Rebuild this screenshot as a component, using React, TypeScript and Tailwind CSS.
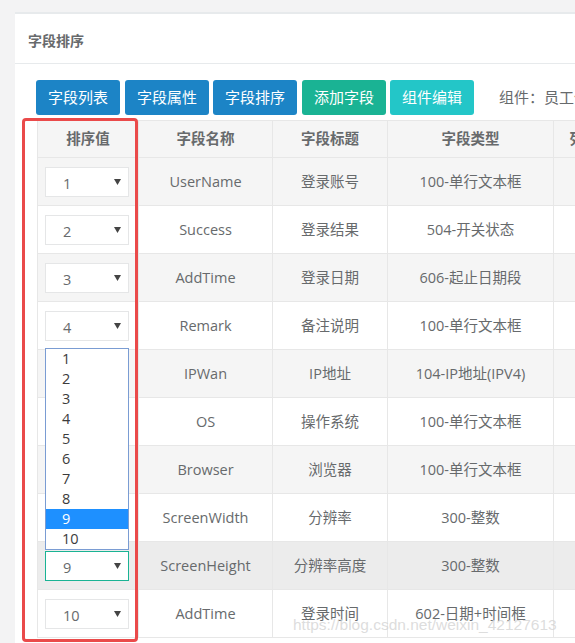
import React from "react";

const rows = [
  { v: "1", name: "UserName", title: "登录账号", type: "100-单行文本框" },
  { v: "2", name: "Success", title: "登录结果", type: "504-开关状态" },
  { v: "3", name: "AddTime", title: "登录日期", type: "606-起止日期段" },
  { v: "4", name: "Remark", title: "备注说明", type: "100-单行文本框" },
  { v: "5", name: "IPWan", title: "IP地址", type: "104-IP地址(IPV4)" },
  { v: "6", name: "OS", title: "操作系统", type: "100-单行文本框" },
  { v: "7", name: "Browser", title: "浏览器", type: "100-单行文本框" },
  { v: "8", name: "ScreenWidth", title: "分辨率", type: "300-整数" },
  { v: "9", name: "ScreenHeight", title: "分辨率高度", type: "300-整数" },
  { v: "10", name: "AddTime", title: "登录时间", type: "602-日期+时间框" },
];

const font = "font-['Open_Sans','Noto_Sans_CJK_SC',sans-serif]";

function Arrow() {
  return (
    <svg width="7" height="6" viewBox="0 0 7 6" className="absolute right-[7px] top-[11px]">
      <polygon points="0,0 7,0 3.5,6" fill="#444" />
    </svg>
  );
}

function SelectBox({ value, focused, open }: { value: string; focused?: boolean; open?: boolean }) {
  return (
    <div
      className={
        "relative w-[84px] h-[30px] bg-white border " +
        (focused ? "border-[#1ab394]" : "border-[#e5e6e7]")
      }
    >
      <span className="absolute left-[17px] top-[6px] text-[14.5px] leading-[20px] text-[#676a6c]">{value}</span>
      <Arrow />
      {open && (
        <div className="absolute left-[-1px] bottom-[30px] w-[84px] bg-white border border-[#7a9cd3] z-10">
          {Array.from({ length: 10 }, (_, i) => (
            <div
              key={i}
              className={
                "h-[20px] leading-[20px] pl-[16px] text-[14.5px] " +
                (i === 8 ? "bg-[#1e90ff] text-white" : "text-[#3c3c3c]")
              }
            >
              {i + 1}
            </div>
          ))}
        </div>
      )}
    </div>
  );
}

export default function App() {
  return (
    <div className={"relative w-[575px] h-[643px] overflow-hidden bg-[#f3f3f4] pt-[12px] pl-[15px] " + font}>
      <div className="w-[800px] h-[700px] bg-white border-t-2 border-[#e7eaec]">
        <div className="h-[50px] border-b border-[#e7eaec] flex items-center pl-[13px] pt-[3px] text-[14px] font-semibold text-[#676a6c]">
          字段排序
        </div>
        <div className="pt-[16px] pl-[21px]">
          <div className="flex items-center">
            <button className="w-[84px] h-[35px] rounded-[3px] bg-[#1c84c6] text-white text-[15px]">字段列表</button>
            <button className="ml-[5px] w-[84px] h-[35px] rounded-[3px] bg-[#1c84c6] text-white text-[15px]">字段属性</button>
            <button className="ml-[4px] w-[84px] h-[35px] rounded-[3px] bg-[#1c84c6] text-white text-[15px]">字段排序</button>
            <button className="ml-[5px] w-[84px] h-[35px] rounded-[3px] bg-[#1ab394] text-white text-[15px]">添加字段</button>
            <button className="ml-[4px] w-[84px] h-[35px] rounded-[3px] bg-[#23c6c8] text-white text-[15px]">组件编辑</button>
            <span className="ml-[25px] text-[15px] text-[#676a6c] whitespace-nowrap">组件：员工信息表</span>
          </div>
          <div className="mt-[5px] ml-[1px] w-[700px] text-[14.5px] text-[#676a6c]">
            <div className="flex h-[38px] border-t border-b border-[#e7e7e7] bg-[#f5f5f5] font-semibold">
              <div className="w-[102px] border-l border-r border-[#e7e7e7] flex items-center justify-center">排序值</div>
              <div className="w-[134px] border-r border-[#e7e7e7] flex items-center justify-center">字段名称</div>
              <div className="w-[115px] border-r border-[#e7e7e7] flex items-center justify-center">字段标题</div>
              <div className="w-[166px] border-r border-[#e7e7e7] flex items-center justify-center">字段类型</div>
              <div className="w-[90px] border-r border-[#e7e7e7] flex items-center justify-center whitespace-nowrap">列表显示</div>
            </div>
            {rows.map((r, i) => (
              <div
                key={i}
                className={
                  "flex h-[48px] border-b border-[#e7e7e7] " +
                  (i === 8 ? "bg-[#ececec]" : i % 2 === 0 ? "bg-[#f5f5f5]" : "bg-white")
                }
              >
                <div className="w-[102px] border-l border-r border-[#e7e7e7] flex items-center pl-[7px]">
                  {i >= 4 && i <= 7 ? null : (
                    <SelectBox value={r.v} focused={i === 8} open={i === 8} />
                  )}
                </div>
                <div className="w-[134px] border-r border-[#e7e7e7] flex items-center justify-center">{r.name}</div>
                <div className="w-[115px] border-r border-[#e7e7e7] flex items-center justify-center">{r.title}</div>
                <div className="w-[166px] border-r border-[#e7e7e7] flex items-center justify-center">{r.type}</div>
                <div className="w-[90px] border-r border-[#e7e7e7]"></div>
              </div>
            ))}
          </div>
        </div>
      </div>
      <div className="absolute left-[22px] top-[118px] w-[116px] h-[524px] border-[3px] border-[#ea4a4a] rounded-[4px] pointer-events-none" />
      <div className="absolute left-[293px] top-[615px] text-[15.5px] leading-[20px] text-[#d4d4d4]/80 font-['Liberation_Sans',sans-serif] whitespace-nowrap">
        https://blog.csdn.net/weixin_42127613
      </div>
    </div>
  );
}
